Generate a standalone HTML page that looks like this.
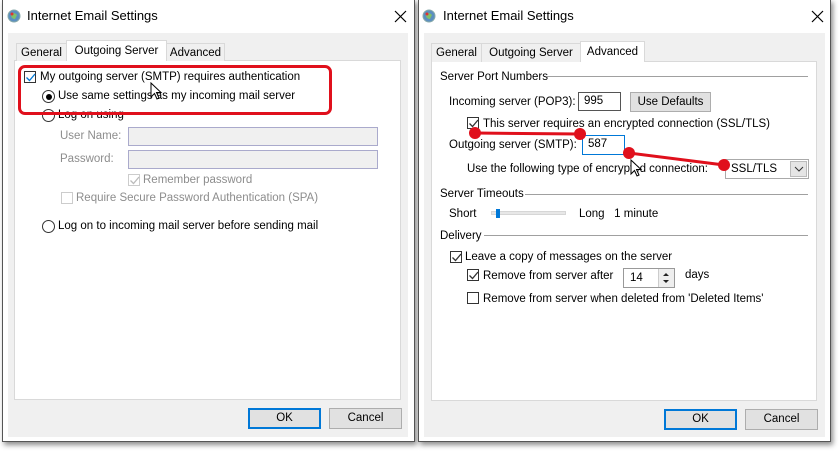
<!DOCTYPE html>
<html><head><meta charset="utf-8"><style>
*{box-sizing:border-box;margin:0;padding:0}
body{width:839px;height:452px;background:#fff;position:relative;overflow:hidden;font-family:"Liberation Sans",sans-serif;font-size:11.5px;color:#000}
.a{position:absolute;white-space:nowrap;line-height:17px}
.dlg{position:absolute;background:#fff;border:1px solid #555;box-shadow:2px 3px 5px rgba(0,0,0,.45)}
.gray{position:absolute;background:#f0f0f0}
.panel{position:absolute;background:#fff;border:1px solid #d9d9d9}
.tab{position:absolute;background:#f0f0f0;border:1px solid #d9d9d9;border-bottom:none;text-align:center;line-height:18px;font-size:11.5px}
.tab.sel{background:#fff;z-index:2;line-height:20px}
.cb{position:absolute;width:12px;height:12px;border:1px solid #333;background:#fff}
.cb.dis{border-color:#ccc}
.rd{position:absolute;width:13px;height:13px;border:1px solid #333;border-radius:50%;background:#fff}
.btn{position:absolute;background:#e1e1e1;border:1px solid #adadad;text-align:center;line-height:19px}
.btn.def{border:2px solid #0078d7;line-height:17px}
.box{position:absolute;background:#fff;border:1px solid #7a7a7a;padding-left:5px;line-height:17px}
.hl{position:absolute;height:1px;background:#a0a0a0}
.dis{color:#8d8d8d}
.ttl{position:absolute;white-space:nowrap;font-size:13px}
</style></head><body>

<!-- LEFT DIALOG -->
<div class="dlg" style="left:2px;top:-1px;width:413px;height:443px"></div>
<div class="gray" style="left:8px;top:33px;width:400px;height:404px"></div>
<svg class="a" style="left:7px;top:9px" width="14" height="14"><circle cx="7" cy="7" r="6" fill="#5b8fc0"/><circle cx="7" cy="7" r="6" fill="none" stroke="#8aa" stroke-width="1"/><path d="M4 4 Q7 3 10 6 L8 10 Q5 10 4 7Z" fill="#7fc06a"/><circle cx="5" cy="5" r="1.5" fill="#d33"/></svg>
<div class="ttl" style="left:27px;top:8px">Internet Email Settings</div>
<svg class="a" style="left:394px;top:10px" width="13" height="13"><path d="M1 1L12 12M12 1L1 12" stroke="#000" stroke-width="1.2"/></svg>
<div class="panel" style="left:14px;top:60px;width:387px;height:340px"></div>
<div class="tab" style="left:16px;top:43px;width:51px;height:18px">General</div>
<div class="tab sel" style="left:66px;top:40px;width:101px;height:21px">Outgoing Server</div>
<div class="tab" style="left:166px;top:43px;width:59px;height:18px">Advanced</div>

<div class="cb" style="left:24px;top:71px;border-color:#333"></div>
<svg class="a" style="left:25px;top:72px" width="11" height="11"><path d="M1.5 5.5L4.5 8.5L10 2" stroke="#0078d7" stroke-width="1.3" fill="none"/></svg>
<div class="a" style="left:40px;top:69px">My outgoing server (SMTP) requires authentication</div>
<div class="rd" style="left:42px;top:90px"></div><div class="a" style="left:45.5px;top:93.5px;width:6px;height:6px;border-radius:50%;background:#000"></div>
<div class="a" style="left:58px;top:88px">Use same settings as my incoming mail server</div>
<div class="rd" style="left:42px;top:109px"></div>
<div class="a" style="left:58px;top:107px">Log on using</div>
<div class="a dis" style="left:60px;top:128px">User Name:</div>
<div class="box" style="left:128px;top:127px;width:250px;height:19px;background:#f0f0f0;border-color:#aac"></div>
<div class="a dis" style="left:60px;top:151px">Password:</div>
<div class="box" style="left:128px;top:150px;width:250px;height:19px;background:#f0f0f0;border-color:#aac"></div>
<div class="cb dis" style="left:128px;top:174px"></div>
<svg class="a" style="left:129px;top:175px" width="11" height="11"><path d="M1.5 5.5L4.5 8.5L10 2" stroke="#bbb" stroke-width="1.3" fill="none"/></svg>
<div class="a dis" style="left:143px;top:172px">Remember password</div>
<div class="cb dis" style="left:61px;top:192px"></div>
<div class="a dis" style="left:76px;top:190px">Require Secure Password Authentication (SPA)</div>
<div class="rd" style="left:42px;top:220px"></div>
<div class="a" style="left:58px;top:218px">Log on to incoming mail server before sending mail</div>
<div class="a" style="left:18px;top:65px;width:314px;height:50px;border:3px solid #e0101c;border-radius:7px"></div>
<svg class="a" style="left:150px;top:82px" width="14" height="20"><path d="M1 1L1 15L4.5 11.5L7 17L9 16L6.5 10.5L11 10.5Z" fill="#fff" stroke="#000" stroke-width="1"/></svg>
<div class="btn def" style="left:248px;top:408px;width:73px;height:21px">OK</div>
<div class="btn" style="left:329px;top:408px;width:73px;height:21px">Cancel</div>

<!-- RIGHT DIALOG -->
<div class="dlg" style="left:418px;top:-1px;width:413px;height:443px"></div>
<div class="gray" style="left:424px;top:33px;width:401px;height:404px"></div>
<svg class="a" style="left:422px;top:9px" width="14" height="14"><circle cx="7" cy="7" r="6" fill="#5b8fc0"/><circle cx="7" cy="7" r="6" fill="none" stroke="#8aa" stroke-width="1"/><path d="M4 4 Q7 3 10 6 L8 10 Q5 10 4 7Z" fill="#7fc06a"/><circle cx="5" cy="5" r="1.5" fill="#d33"/></svg>
<div class="ttl" style="left:443px;top:8px">Internet Email Settings</div>
<svg class="a" style="left:811px;top:10px" width="13" height="13"><path d="M1 1L12 12M12 1L1 12" stroke="#000" stroke-width="1.2"/></svg>
<div class="panel" style="left:431px;top:61px;width:386px;height:340px"></div>
<div class="tab" style="left:431px;top:43px;width:51px;height:19px">General</div>
<div class="tab" style="left:481px;top:43px;width:100px;height:19px">Outgoing Server</div>
<div class="tab sel" style="left:580px;top:41px;width:65px;height:21px">Advanced</div>

<div class="a" style="left:440px;top:69px">Server Port Numbers</div><div class="hl" style="left:547px;top:76px;width:261px"></div>
<div class="a" style="left:449px;top:94px">Incoming server (POP3):</div>
<div class="box" style="left:578px;top:92px;width:43px;height:19px;border-color:#555">995</div>
<div class="btn" style="left:630px;top:92px;width:81px;height:20px">Use Defaults</div>
<div class="cb" style="left:467px;top:117px"></div>
<svg class="a" style="left:468px;top:118px" width="11" height="11"><path d="M1.5 5.5L4.5 8.5L10 2" stroke="#333" stroke-width="1.3" fill="none"/></svg>
<div class="a" style="left:483px;top:116px">This server requires an encrypted connection (SSL/TLS)</div>
<div class="a" style="left:449px;top:137px">Outgoing server (SMTP):</div>
<div class="box" style="left:582px;top:135px;width:43px;height:20px;border-color:#0078d7">587</div>
<div class="a" style="left:467px;top:161px">Use the following type of encrypted connection:</div>
<div class="box" style="left:725px;top:159px;width:84px;height:20px;border-color:#aaa;line-height:18px">SSL/TLS</div>
<div class="a" style="left:790px;top:161px;width:17px;height:16px;background:#e5e5e5;border:1px solid #bbb"></div>
<svg class="a" style="left:794px;top:165px" width="10" height="8"><path d="M1 2L5 6L9 2" stroke="#333" fill="none"/></svg>
<div class="a" style="left:440px;top:186px">Server Timeouts</div><div class="hl" style="left:525px;top:194px;width:283px"></div>
<div class="a" style="left:449px;top:206px">Short</div>
<div class="a" style="left:491px;top:211px;width:75px;height:4px;background:#e7e7e7;border:1px solid #d6d6d6"></div>
<div class="a" style="left:496px;top:209px;width:4px;height:9px;background:#0078d7"></div>
<div class="a" style="left:579px;top:206px">Long&nbsp;&nbsp; 1 minute</div>
<div class="a" style="left:440px;top:228px">Delivery</div><div class="hl" style="left:484px;top:235px;width:324px"></div>
<div class="cb" style="left:450px;top:251px"></div>
<svg class="a" style="left:451px;top:252px" width="11" height="11"><path d="M1.5 5.5L4.5 8.5L10 2" stroke="#333" stroke-width="1.3" fill="none"/></svg>
<div class="a" style="left:465px;top:249px">Leave a copy of messages on the server</div>
<div class="cb" style="left:467px;top:269px"></div>
<svg class="a" style="left:468px;top:270px" width="11" height="11"><path d="M1.5 5.5L4.5 8.5L10 2" stroke="#333" stroke-width="1.3" fill="none"/></svg>
<div class="a" style="left:483px;top:268px">Remove from server after</div>
<div class="box" style="left:623px;top:268px;width:52px;height:20px;border-color:#999;line-height:19px;padding-left:6px">14</div>
<div class="a" style="left:658px;top:269px;width:16px;height:18px;background:#eee;border-left:1px solid #ccc"></div>
<svg class="a" style="left:661px;top:270px" width="10" height="16"><path d="M2 6L5 3L8 6Z M2 10L5 13L8 10Z" fill="#222"/></svg>
<div class="a" style="left:685px;top:267px">days</div>
<div class="cb" style="left:467px;top:292px"></div>
<div class="a" style="left:483px;top:291px">Remove from server when deleted from 'Deleted Items'</div>
<div class="btn def" style="left:664px;top:409px;width:73px;height:21px">OK</div>
<div class="btn" style="left:745px;top:409px;width:73px;height:21px">Cancel</div>

<svg class="a" style="left:0;top:0" width="839" height="452">
<path d="M475 133L580 134M629 153L724 165" stroke="#e0101c" stroke-width="3"/>
<circle cx="475" cy="133" r="6" fill="#e0101c"/><circle cx="580" cy="134" r="6" fill="#e0101c"/>
<circle cx="629" cy="153" r="6" fill="#e0101c"/><circle cx="724" cy="165" r="6" fill="#e0101c"/>
<path d="M631 160L631 174L634.5 170.5L637 176L639 175L636.5 169.5L641 169.5Z" fill="#fff" stroke="#000" stroke-width="1"/>
</svg>
</body></html>
